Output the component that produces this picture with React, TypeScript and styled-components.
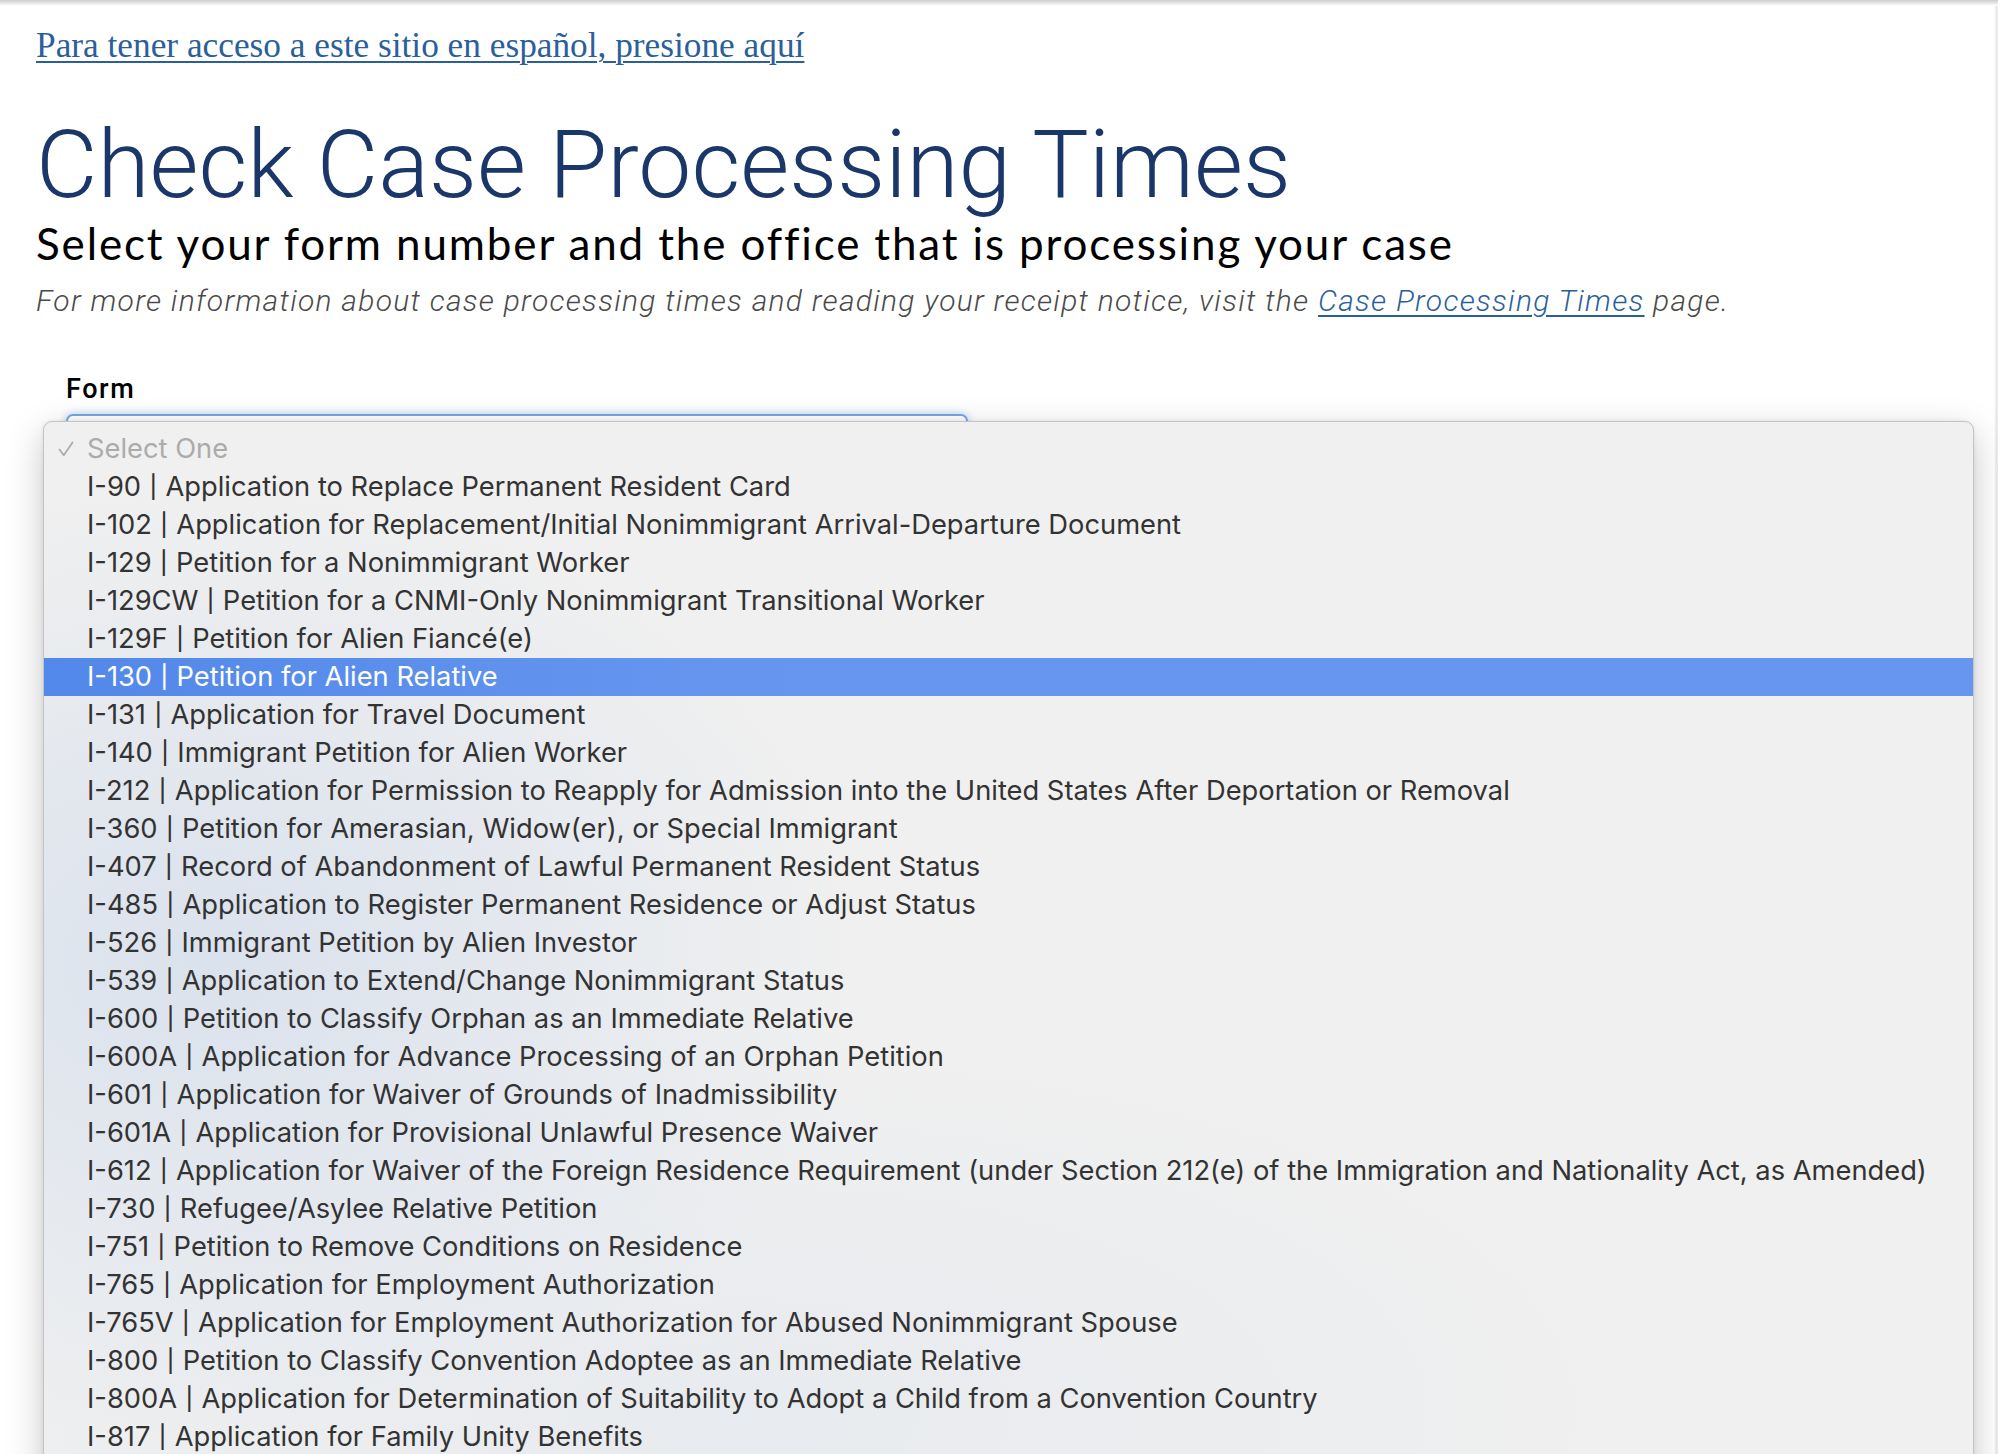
import React from 'react'
import styled, { createGlobalStyle } from 'styled-components'

const GlobalStyle = createGlobalStyle`
  html, body {
    margin: 0;
    padding: 0;
    background: #ffffff;
  }
`

const FORM_OPTIONS = [
  'I-90 | Application to Replace Permanent Resident Card',
  'I-102 | Application for Replacement/Initial Nonimmigrant Arrival-Departure Document',
  'I-129 | Petition for a Nonimmigrant Worker',
  'I-129CW | Petition for a CNMI-Only Nonimmigrant Transitional Worker',
  'I-129F | Petition for Alien Fiancé(e)',
  'I-130 | Petition for Alien Relative',
  'I-131 | Application for Travel Document',
  'I-140 | Immigrant Petition for Alien Worker',
  'I-212 | Application for Permission to Reapply for Admission into the United States After Deportation or Removal',
  'I-360 | Petition for Amerasian, Widow(er), or Special Immigrant',
  'I-407 | Record of Abandonment of Lawful Permanent Resident Status',
  'I-485 | Application to Register Permanent Residence or Adjust Status',
  'I-526 | Immigrant Petition by Alien Investor',
  'I-539 | Application to Extend/Change Nonimmigrant Status',
  'I-600 | Petition to Classify Orphan as an Immediate Relative',
  'I-600A | Application for Advance Processing of an Orphan Petition',
  'I-601 | Application for Waiver of Grounds of Inadmissibility',
  'I-601A | Application for Provisional Unlawful Presence Waiver',
  'I-612 | Application for Waiver of the Foreign Residence Requirement (under Section 212(e) of the Immigration and Nationality Act, as Amended)',
  'I-730 | Refugee/Asylee Relative Petition',
  'I-751 | Petition to Remove Conditions on Residence',
  'I-765 | Application for Employment Authorization',
  'I-765V | Application for Employment Authorization for Abused Nonimmigrant Spouse',
  'I-800 | Petition to Classify Convention Adoptee as an Immediate Relative',
  'I-800A | Application for Determination of Suitability to Adopt a Child from a Convention Country',
  'I-817 | Application for Family Unity Benefits',
]

const HIGHLIGHTED = 'I-130 | Petition for Alien Relative'

const CheckIcon = () => (
  <svg width="18" height="18" viewBox="0 0 18 18" fill="none">
    <path d="M2.5 9.5 L6.8 15.2 L15.5 2.5" stroke="#ababab" strokeWidth="1.8" strokeLinecap="round" strokeLinejoin="round" />
  </svg>
)

const App = () => {
  return (
    <>
      <GlobalStyle />
      <StyledPage>
        <StyledTopShade />
        <StyledContent>
          <StyledLangLink href="#">
            Para tener acceso a este sitio en español, presione aquí
          </StyledLangLink>

          <StyledTitle>Check Case Processing Times</StyledTitle>
          <StyledSubtitle>
            Select your form number and the office that is processing your case
          </StyledSubtitle>
          <StyledInfo>
            For more information about case processing times and reading your receipt notice, visit the{' '}
            <StyledInfoLink href="#">Case Processing Times</StyledInfoLink> page.
          </StyledInfo>

          <StyledField>
            <StyledLabel>Form</StyledLabel>
            <StyledSelectBox />
          </StyledField>
        </StyledContent>

        <StyledMenu>
          <StyledOption placeholder>
            <StyledCheck>
              <CheckIcon />
            </StyledCheck>
            Select One
          </StyledOption>
          {FORM_OPTIONS.map((label) => {
            const [code, title] = label.split(' | ')
            return (
              <StyledOption key={label} active={label === HIGHLIGHTED}>
                {code} <StyledPipe>|</StyledPipe> {title}
              </StyledOption>
            )
          })}
        </StyledMenu>
      </StyledPage>
    </>
  )
}

export default App

const StyledPage = styled.div`
  position: relative;
  height: 1454px;
  overflow: hidden;
  box-shadow: inset -3px 0 0 #ececec;
`

const StyledTopShade = styled.div`
  height: 6px;
  background: linear-gradient(180deg, #cdcdcd 0%, #e6e6e6 50%, #ffffff 100%);
`

const StyledContent = styled.div`
  display: flex;
  flex-direction: column;
  align-items: flex-start;
  padding: 20px 0 0 36px;
`

const StyledLangLink = styled.a`
  display: block;
  font-family: "Liberation Serif", "Times New Roman", serif;
  font-size: 35.3px;
  line-height: 40px;
  color: #2b5f9c;
  text-decoration: underline;
  text-decoration-thickness: 2px;
  text-underline-offset: 4px;
`

const StyledTitle = styled.h1`
  margin: 52px 0 0;
  font-family: Roboto, "Liberation Sans", sans-serif;
  font-weight: 300;
  font-size: 94.7px;
  line-height: 94.7px;
  color: #1b3769;
`

const StyledSubtitle = styled.h2`
  margin: 6px 0 0;
  font-family: Lato, "Liberation Sans", sans-serif;
  font-weight: 400;
  font-size: 44px;
  line-height: 48px;
  letter-spacing: 1.85px;
  color: #000000;
`

const StyledInfo = styled.p`
  margin: 16px 0 0;
  font-family: Roboto, "Liberation Sans", sans-serif;
  font-style: italic;
  font-weight: 300;
  font-size: 30px;
  line-height: 36px;
  letter-spacing: 1.28px;
  color: #4a4a4a;
`

const StyledInfoLink = styled.a`
  color: #2b5f9c;
  text-decoration: underline;
  text-decoration-thickness: 2px;
  text-underline-offset: 4px;
`

const StyledField = styled.div`
  display: flex;
  flex-direction: column;
  margin: 54px 0 0 30px;
  gap: 9px;
`

const StyledLabel = styled.label`
  font-family: Roboto, "Liberation Sans", sans-serif;
  font-weight: 500;
  font-size: 27px;
  line-height: 32px;
  letter-spacing: 1.6px;
  color: #000000;
`

const StyledSelectBox = styled.div`
  width: 902px;
  height: 52px;
  box-sizing: border-box;
  border: 2px solid #78a6e2;
  border-radius: 7px;
  background: #ffffff;
  box-shadow: 0 0 10px rgba(90, 150, 225, 0.45);
`

const StyledMenu = styled.div`
  position: absolute;
  top: 421px;
  left: 43px;
  width: 1931px;
  height: 1100px;
  box-sizing: border-box;
  padding-top: 8px;
  display: flex;
  flex-direction: column;
  border: 1px solid #c4c4c4;
  border-radius: 9px;
  background:
    radial-gradient(ellipse 650px 480px at 170px 540px, rgba(196, 212, 234, 0.5), rgba(240, 240, 240, 0) 100%),
    radial-gradient(ellipse 900px 380px at 700px 990px, rgba(212, 222, 236, 0.3), rgba(240, 240, 240, 0) 100%),
    #f0f0f0;
  box-shadow: 0 12px 36px rgba(0, 0, 0, 0.22), 0 0 4px rgba(0, 0, 0, 0.08);
`

const StyledOption = styled.div<{ active?: boolean; placeholder?: boolean }>`
  position: relative;
  height: 38px;
  flex: 0 0 38px;
  padding-left: 43px;
  font-family: Inter, "Noto Sans", sans-serif;
  font-size: 27.3px;
  line-height: 38px;
  white-space: nowrap;
  color: ${({ active, placeholder }) => (active ? '#ffffff' : placeholder ? '#ababab' : '#333333')};
  background: ${({ active }) => (active ? 'linear-gradient(90deg, #5288e9 0%, #6595ef 35%, #6796f0 100%)' : 'transparent')};
`

const StyledPipe = styled.span`
  display: inline-block;
  transform: scaleY(0.82);
  transform-origin: 50% 62%;
`

const StyledCheck = styled.span`
  position: absolute;
  left: 13px;
  top: 10px;
  width: 18px;
  height: 18px;
  display: flex;
`
